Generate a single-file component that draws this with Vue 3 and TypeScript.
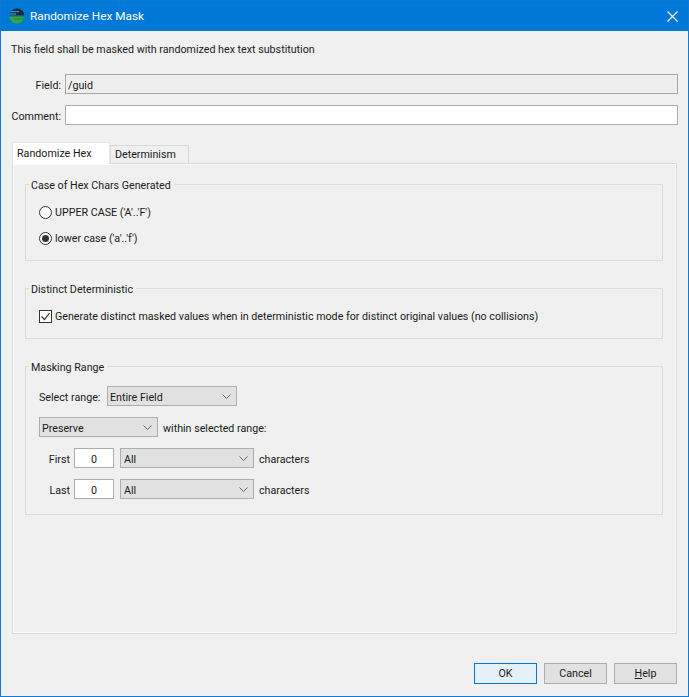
<template>
  <div class="window">
    <div class="titlebar">
      <svg class="app-icon" viewBox="0 0 16 16" width="16" height="16" aria-hidden="true">
        <defs>
          <clipPath id="disc"><circle cx="8" cy="8" r="7.6" /></clipPath>
        </defs>
        <g clip-path="url(#disc)">
          <rect x="0" y="0" width="16" height="7" fill="#1c2b33" />
          <rect x="0" y="3" width="10" height="1.2" fill="#2e9bd6" />
          <rect x="0" y="5.4" width="7" height="1.2" fill="#2e9bd6" />
          <rect x="0" y="7" width="16" height="1.6" fill="#0f5f8a" />
          <rect x="0" y="8.6" width="16" height="8" fill="#35a83f" />
          <rect x="5" y="10.4" width="11" height="1" fill="#1f7f33" />
        </g>
      </svg>
      <span class="title">Randomize Hex Mask</span>
      <svg class="close" viewBox="0 0 11 11" width="11" height="11" aria-hidden="true">
        <path d="M.5.5l10 10M10.5.5l-10 10" stroke="#fff" stroke-width="1.1" fill="none" />
      </svg>
    </div>

    <div class="content">
      <p class="intro">This field shall be masked with randomized hex text substitution</p>

      <div class="form-row field-row">
        <label>Field:</label>
        <input class="text-input readonly" type="text" value="/guid" readonly />
      </div>
      <div class="form-row comment-row">
        <label>Comment:</label>
        <input class="text-input" type="text" value="" />
      </div>

      <div class="tabs">
        <div class="tab active">Randomize Hex</div>
        <div class="tab">Determinism</div>
      </div>

      <div class="panel">
        <fieldset class="group case-group">
          <legend>Case of Hex Chars Generated</legend>
          <div v-for="opt in caseOptions" :key="opt.label" class="choice">
            <span class="radio" :class="{ on: opt.on }"></span>
            <span>{{ opt.label }}</span>
          </div>
        </fieldset>

        <fieldset class="group distinct-group">
          <legend>Distinct Deterministic</legend>
          <div class="choice">
            <span class="check">
              <svg viewBox="0 0 13 13" width="13" height="13" aria-hidden="true">
                <path d="M2.5 6.5l3 3 5-6.5" stroke="#333" stroke-width="1.2" fill="none" />
              </svg>
            </span>
            <span>Generate distinct masked values when in deterministic mode for distinct original values (no collisions)</span>
          </div>
        </fieldset>

        <fieldset class="group range-group">
          <legend>Masking Range</legend>
          <div class="line">
            <span class="range-label">Select range:</span>
            <div class="select range-select">
              <span>Entire Field</span>
              <svg viewBox="0 0 9 5" width="9" height="5" aria-hidden="true"><path d="M.5.5l4 4 4-4" stroke="#666" fill="none" /></svg>
            </div>
          </div>
          <div class="line">
            <div class="select mode-select">
              <span>Preserve</span>
              <svg viewBox="0 0 9 5" width="9" height="5" aria-hidden="true"><path d="M.5.5l4 4 4-4" stroke="#666" fill="none" /></svg>
            </div>
            <span>within selected range:</span>
          </div>
          <div v-for="row in countRows" :key="row" class="line count-row">
            <span class="count-label">{{ row }}</span>
            <input class="count-input" type="text" value="0" />
            <div class="select count-select">
              <span>All</span>
              <svg viewBox="0 0 9 5" width="9" height="5" aria-hidden="true"><path d="M.5.5l4 4 4-4" stroke="#666" fill="none" /></svg>
            </div>
            <span>characters</span>
          </div>
        </fieldset>
      </div>

      <div class="buttons">
        <button class="btn primary">OK</button>
        <button class="btn">Cancel</button>
        <button class="btn"><u>H</u>elp</button>
      </div>
    </div>
  </div>
</template>

<script setup lang="ts">
const caseOptions = [
  { label: "UPPER CASE ('A'..'F')", on: false },
  { label: "lower case ('a'..'f')", on: true },
]
const countRows = ['First', 'Last']
</script>

<style>
html,
body {
  margin: 0;
  background: #f0f0f0;
}
</style>

<style scoped>
.window {
  box-sizing: border-box;
  width: 689px;
  height: 697px;
  display: flex;
  flex-direction: column;
  border: 1px solid #0f78d0;
  background: #f0f0f0;
  font-family: Roboto, 'Noto Sans', sans-serif;
  font-size: 10.7px;
  color: #1a1a1a;
}

.titlebar {
  height: 30px;
  flex-shrink: 0;
  display: flex;
  align-items: center;
  padding: 0 10px 0 8px;
  background: #0078d7;
  color: #fff;
  font-size: 11.8px;
}
.app-icon {
  margin-right: 5px;
}
.title {
  flex: 1;
}

.content {
  flex: 1;
  display: flex;
  flex-direction: column;
  padding: 0 10px 12px 10px;
  min-height: 0;
}

.intro {
  margin: 11px 0 0;
  line-height: 15px;
  height: 15px;
}

.form-row {
  display: flex;
  align-items: center;
  gap: 4px;
}
.form-row label {
  width: 50px;
  padding-top: 2px;
  text-align: right;
}
.field-row {
  margin-top: 17px;
}
.comment-row {
  margin-top: 11px;
}

.text-input {
  box-sizing: border-box;
  flex: 1;
  min-width: 0;
  height: 20px;
  padding: 2px 2px 0;
  border: 1px solid #adadad;
  background: #fff;
  font: inherit;
  color: inherit;
  outline: none;
}
.text-input.readonly {
  background: #eeeeee;
  border-color: #a5a5a5;
}

.tabs {
  display: flex;
  align-items: flex-end;
  height: 20px;
  margin: 18px 0 0 1px;
  position: relative;
  z-index: 1;
}
.tab {
  box-sizing: border-box;
  width: 79px;
  height: 18px;
  padding: 1px 0 0 4px;
  border: 1px solid #d9d9d9;
  border-bottom: none;
  line-height: 16px;
}
.tab.active {
  width: 98px;
  height: 22px;
  padding: 3px 0 0 4px;
  background: #fff;
  margin-bottom: -1px;
  border-color: #e4e4e4;
}

.panel {
  flex: 1;
  min-height: 0;
  margin: 0 1px 0 1px;
  border: 1px solid #d9d9d9;
  box-shadow: inset 0 0 0 1px #fbfbfb;
  padding: 12px 13px 0 12px;
  display: flex;
  flex-direction: column;
  gap: 19px;
}

.group {
  margin: 0;
  padding: 0 0 0 13px;
  border: 1px solid #dcdcdc;
  min-width: 0;
}
.group legend {
  height: 16px;
  padding: 0 3px 0 2px;
  margin-left: -10px;
  line-height: 19px;
}

.choice {
  display: flex;
  align-items: center;
  gap: 3px;
  height: 16px;
}
.case-group {
  height: 85px;
  box-sizing: border-box;
}
.case-group .choice {
  margin-top: 10px;
}
.case-group .choice:first-of-type {
  margin-top: 12px;
}
.distinct-group {
  height: 59px;
  box-sizing: border-box;
}
.distinct-group .choice {
  margin-top: 12px;
}
.range-group {
  height: 157px;
  box-sizing: border-box;
}

.radio {
  box-sizing: border-box;
  width: 13px;
  height: 13px;
  border: 1px solid #333;
  border-radius: 50%;
  background: #fff;
  position: relative;
}
.radio.on::after {
  content: '';
  position: absolute;
  left: 2px;
  top: 2px;
  width: 7px;
  height: 7px;
  border-radius: 50%;
  background: #333;
}

.check {
  box-sizing: border-box;
  width: 13px;
  height: 13px;
  border: 1px solid #333;
  background: #fff;
  display: flex;
  align-items: center;
  justify-content: center;
}
.check svg {
  flex-shrink: 0;
}

.line {
  display: flex;
  align-items: center;
  gap: 5px;
  height: 20px;
  margin-top: 11px;
}
.line:first-of-type {
  margin-top: 12px;
}
.line span {
  padding-top: 2px;
}
.range-label {
  flex: 0 0 63px;
  white-space: nowrap;
}
.count-row {
  padding-left: 9px;
}
.count-label {
  width: 22px;
  text-align: right;
  margin-right: -1px;
}

.select {
  box-sizing: border-box;
  height: 20px;
  display: flex;
  align-items: center;
  justify-content: space-between;
  padding: 0 5px 0 2px;
  border: 1px solid #adadad;
  background: #e1e1e1;
}
.range-select {
  width: 130px;
}
.mode-select {
  width: 119px;
}
.count-select {
  width: 134px;
  margin-left: 1px;
  padding-left: 3px;
}

.count-input {
  box-sizing: border-box;
  width: 40px;
  height: 20px;
  padding: 2px 0 0;
  border: 1px solid #adadad;
  background: #fff;
  font: inherit;
  color: inherit;
  text-align: center;
  outline: none;
}

.buttons {
  flex-shrink: 0;
  display: flex;
  justify-content: flex-end;
  gap: 7px;
  margin: 29px 1px 0 0;
}
.btn {
  box-sizing: border-box;
  width: 63px;
  height: 21px;
  padding: 0;
  border: 1px solid #adadad;
  background: #e1e1e1;
  font: inherit;
  color: inherit;
}
.btn.primary {
  border-color: #0078d7;
  background: #e5f1fb;
}
</style>
